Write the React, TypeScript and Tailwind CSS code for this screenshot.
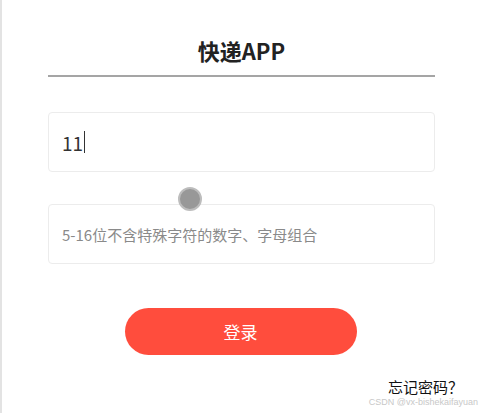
import React from "react";

export default function App() {
  const cjk = { fontFamily: '"Noto Sans CJK SC", "Noto Sans", sans-serif' };
  return (
    <div className="w-[483px] h-[413px] bg-white overflow-hidden flex" style={cjk}>
      <div className="w-[2px] h-full bg-[#e3e3e3]" />
      <div className="relative flex-1 flex flex-col pl-[46px] pr-[48px]">
        <div className="h-[77px] flex items-center justify-center border-b-2 border-[#a5a5a5] pt-[24px]">
          <span className="text-[22px] font-bold text-[#222] leading-none">快递APP</span>
        </div>
        <div className="mt-[35px] h-[60px] border border-[#ececec] rounded-[4px] flex items-center pl-[13px]">
          <span className="text-[19px] text-[#333] leading-none">11</span>
          <span className="w-px h-[22px] bg-[#333] ml-[1px]" />
        </div>
        <div className="mt-[32px] h-[60px] border border-[#ececec] rounded-[4px] flex items-center pl-[13px]">
          <span className="text-[15px] text-[#8a8a8a] leading-none">5-16位不含特殊字符的数字、字母组合</span>
        </div>
        <div className="mt-[44px] flex justify-center">
          <div className="ml-[-2px] w-[232px] h-[47px] rounded-full bg-[#ff4d3d] flex items-center justify-center">
            <span className="text-[17px] text-white leading-none">登录</span>
          </div>
        </div>
        <div className="mt-[24px] flex justify-end mr-[-28px]">
          <span className="text-[15px] text-[#111] leading-none">忘记密码？</span>
        </div>
        <div className="mt-[4px] flex justify-end mr-[-43px]">
          <span className="text-[9px] text-[#c8c8c8] leading-none" style={{ fontFamily: '"Liberation Sans", sans-serif' }}>CSDN @vx-bishekaifayuan</span>
        </div>
        <div className="absolute left-[176px] top-[187px] w-[24px] h-[24px] rounded-full bg-[#989898] border-[2px] border-[#bdbdbd]" />
      </div>
    </div>
  );
}
